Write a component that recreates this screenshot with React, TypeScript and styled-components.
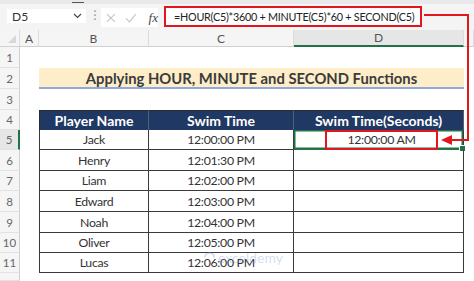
import styled, { createGlobalStyle } from "styled-components";

const GlobalStyle = createGlobalStyle`
  html, body { margin: 0; padding: 0; background: #fff; }
  body { font-family: Lato, "Open Sans", sans-serif; }
`;

const Window = styled.div`
  position: relative;
  width: 474px;
  height: 281px;
  overflow: hidden;
  background: #fff;
`;

const FormulaBar = styled.div`
  display: flex;
  align-items: center;
  height: 30px;
  padding-left: 7px;
  box-sizing: border-box;
  background: linear-gradient(#e9e9e9 0 4px, #f4f4f4 4px);
`;

const NameBox = styled.div`
  position: relative;
  display: flex;
  align-items: center;
  justify-content: space-between;
  width: 79px;
  height: 14px;
  margin-top: 2px;
  padding: 0 4px 0 5px;
  box-sizing: border-box;
  background: #fff;
  font-size: 12px;
  color: #333;
`;

const DropTick = styled.span`
  position: absolute;
  right: 2px;
  top: -7px;
  width: 12px;
  height: 1px;
  background: #555;
`;

const Grip = styled.span`
  width: 2px;
  margin: 0 5px 0 8px;
  color: #999;
  font-size: 11px;
  line-height: 4px;
  display: flex;
  flex-direction: column;
  align-items: center;
  &::before { content: "·"; }
  &::after { content: "·"; }
`;

const FxBox = styled.div`
  display: flex;
  align-items: center;
  gap: 9px;
  width: 57px;
  height: 19px;
  margin-top: 5px;
  padding-left: 5px;
  box-sizing: border-box;
  background: #fff;
`;

const FxLabel = styled.span`
  font-family: "Liberation Serif", serif;
  font-style: italic;
  font-size: 13px;
  color: #444;
  margin-left: 3px;
`;

const FormulaInput = styled.div`
  display: flex;
  align-items: center;
  width: 258px;
  height: 21px;
  margin-left: 6px;
  margin-top: 3px;
  padding-left: 8px;
  box-sizing: border-box;
  border: 2px solid #e2171e;
  background: #fff;
  font-size: 10.8px;
  letter-spacing: -0.25px;
  color: #222;
  white-space: nowrap;
  overflow: hidden;
`;

const Sheet = styled.div`
  display: grid;
  grid-template-columns: 20px 19px 110px 145px 170px 1fr;
  grid-template-rows: 17px 21px 21px 21px 20px 20px 21px 20px 21px 21px 20px 20px 1fr;
  height: 251px;
`;

const Corner = styled.div`
  position: relative;
  background: #f5f5f5;
  border-right: 1px solid #dcdcdc;
  border-bottom: 1px solid #d0d0d0;
  &::after {
    content: "";
    position: absolute;
    right: 3px;
    bottom: 3px;
    border-left: 8px solid transparent;
    border-bottom: 8px solid #d8d8d8;
  }
`;

const ColHead = styled.div<{ $active?: boolean }>`
  display: flex;
  align-items: center;
  justify-content: center;
  background: ${({ $active }) => ($active ? "#e6e6e6" : "#f5f5f5")};
  border-right: 1px solid #dcdcdc;
  border-bottom: ${({ $active }) => ($active ? "2px solid #217346" : "1px solid #d0d0d0")};
  font-size: 12px;
  color: #555;
`;

const RowHead = styled.div<{ $active?: boolean }>`
  display: flex;
  align-items: center;
  justify-content: center;
  background: ${({ $active }) => ($active ? "#e6e6e6" : "#f5f5f5")};
  border-right: ${({ $active }) => ($active ? "2px solid #217346" : "1px solid #d0d0d0")};
  border-bottom: 1px solid #e2e2e2;
  font-size: 11.5px;
  color: #666;
`;

const Blank = styled.div<{ $span?: number }>`
  grid-column: span ${({ $span = 1 }) => $span};
`;

const Title = styled.div`
  grid-column: 3 / 6;
  display: flex;
  align-items: center;
  justify-content: center;
  background: #fdedc9;
  border-bottom: 2px solid #8fa9dc;
  font-size: 14.8px;
  font-weight: 700;
  color: #3b3b3b;
`;

const HeadCell = styled.div<{ $first?: boolean }>`
  display: flex;
  align-items: center;
  justify-content: center;
  background: #1f3864;
  border-top: 1px solid #2b2b2b;
  border-right: 1px solid #555f75;
  border-left: ${({ $first }) => ($first ? "1px solid #2b2b2b" : "none")};
  font-size: 14px;
  font-weight: 700;
  color: #fff;
`;

const Cell = styled.div<{ $first?: boolean }>`
  position: relative;
  display: flex;
  align-items: center;
  justify-content: center;
  box-sizing: border-box;
  border-bottom: 1px solid #3a3a3a;
  border-right: 1px solid #3a3a3a;
  border-left: ${({ $first }) => ($first ? "1px solid #3a3a3a" : "none")};
  font-size: 12.3px;
  letter-spacing: -0.3px;
  color: #333;
`;

const SelectedCell = styled(Cell)`
  justify-content: flex-start;
  padding-left: 31px;
  box-shadow: inset 0 0 0 1.5px #217346;
  border-bottom-color: #217346;
  &::after {
    content: "";
    position: absolute;
    right: -3px;
    bottom: -3px;
    width: 5px;
    height: 5px;
    background: #217346;
    border: 1px solid #fff;
  }
`;

const Highlight = styled.span`
  display: flex;
  align-items: center;
  justify-content: center;
  width: 113px;
  height: 20px;
  box-sizing: border-box;
  border: 2px solid #e2171e;
`;

const Overlay = styled.svg`
  position: absolute;
  left: 0;
  top: 0;
  pointer-events: none;
`;

const Watermark = styled.div`
  position: absolute;
  left: 203px;
  top: 249px;
  display: flex;
  align-items: center;
  gap: 2px;
  font-size: 14px;
  color: rgba(110, 140, 200, 0.3);
  pointer-events: none;
`;

const players = [
  { name: "Jack", time: "12:00:00 PM" },
  { name: "Henry", time: "12:01:30 PM" },
  { name: "Liam", time: "12:02:00 PM" },
  { name: "Edward", time: "12:03:00 PM" },
  { name: "Noah", time: "12:04:00 PM" },
  { name: "Oliver", time: "12:05:00 PM" },
  { name: "Lucas", time: "12:06:00 PM" },
];

const Chevron = () => (
  <svg width="9" height="6" viewBox="0 0 9 6">
    <path d="M1 1l3.5 3.5L8 1" fill="none" stroke="#444" strokeWidth="1.2" />
  </svg>
);

const Cross = () => (
  <svg width="10" height="10" viewBox="0 0 10 10">
    <path d="M1 1l8 8M9 1l-8 8" stroke="#c4c4c4" strokeWidth="1.1" />
  </svg>
);

const Check = () => (
  <svg width="12" height="10" viewBox="0 0 12 10">
    <path d="M1 5.5l3.5 3.5L11 1" fill="none" stroke="#c4c4c4" strokeWidth="1.1" />
  </svg>
);

export default function App() {
  return (
    <Window>
      <GlobalStyle />
      <FormulaBar>
        <NameBox>
          D5
          <DropTick />
          <Chevron />
        </NameBox>
        <Grip>·</Grip>
        <FxBox>
          <Cross />
          <Check />
          <FxLabel>fx</FxLabel>
        </FxBox>
        <FormulaInput>=HOUR(C5)*3600 + MINUTE(C5)*60 + SECOND(C5)</FormulaInput>
      </FormulaBar>

      <Sheet>
        <Corner />
        <ColHead>A</ColHead>
        <ColHead>B</ColHead>
        <ColHead>C</ColHead>
        <ColHead $active>D</ColHead>
        <ColHead />

        <RowHead>1</RowHead>
        <Blank $span={5} />

        <RowHead>2</RowHead>
        <Blank />
        <Title>Applying HOUR, MINUTE and SECOND Functions</Title>
        <Blank />

        <RowHead>3</RowHead>
        <Blank $span={5} />

        <RowHead>4</RowHead>
        <Blank />
        <HeadCell $first>Player Name</HeadCell>
        <HeadCell>Swim Time</HeadCell>
        <HeadCell>Swim Time(Seconds)</HeadCell>
        <Blank />

        {players.map((p, i) => (
          <>
            <RowHead key={`h${i}`} $active={i === 0}>
              {i + 5}
            </RowHead>
            <Blank key={`a${i}`} />
            <Cell key={`b${i}`} $first>
              {p.name}
            </Cell>
            <Cell key={`c${i}`}>{p.time}</Cell>
            {i === 0 ? (
              <SelectedCell key={`d${i}`}>
                <Highlight>12:00:00 AM</Highlight>
              </SelectedCell>
            ) : (
              <Cell key={`d${i}`} />
            )}
            <Blank key={`e${i}`} />
          </>
        ))}

        <RowHead />
        <Blank $span={5} />
      </Sheet>

      <Overlay width="474" height="281" viewBox="0 0 474 281">
        <path d="M424 15H468V140H450" fill="none" stroke="#e2171e" strokeWidth="2" />
        <polygon points="441,140 452,135 452,145" fill="#e2171e" />
      </Overlay>

      <Watermark>
        <svg width="13" height="13" viewBox="0 0 14 14">
          <path d="M2 7a5 5 0 0 1 10 0" fill="none" stroke="currentColor" strokeWidth="2" />
        </svg>
        exceldemy
      </Watermark>
    </Window>
  );
}
